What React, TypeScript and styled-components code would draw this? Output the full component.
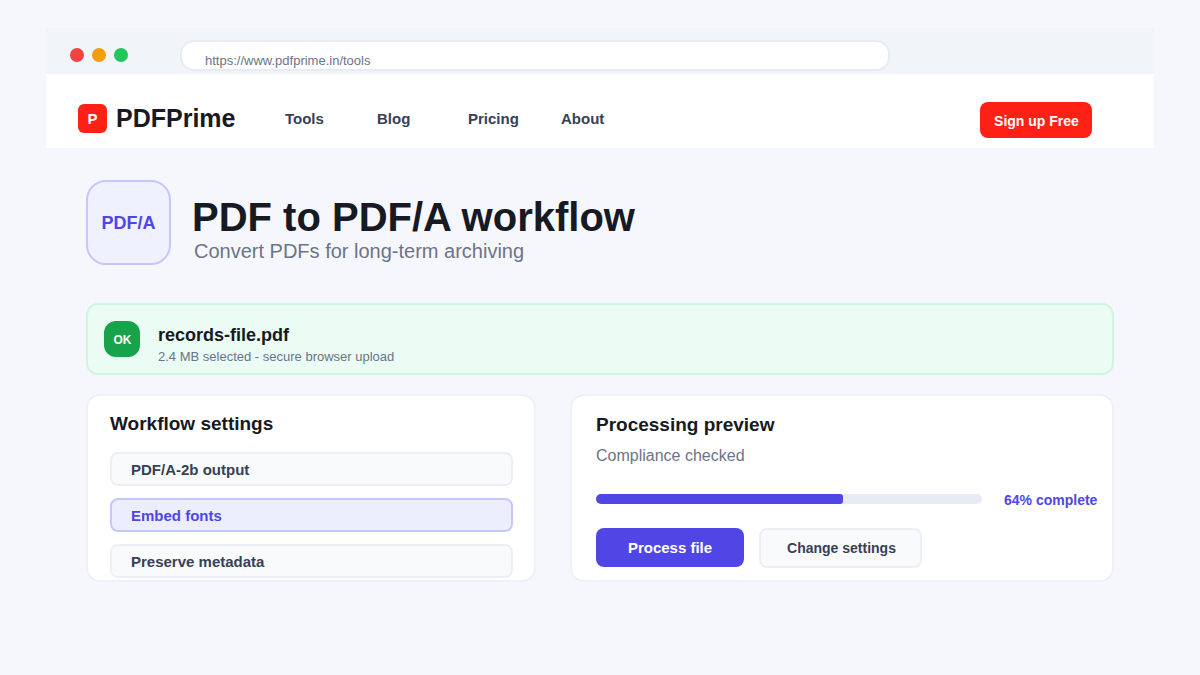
import styled, { createGlobalStyle } from "styled-components";

const fontStack = `"Liberation Sans", Arial, sans-serif`;

const GlobalStyle = createGlobalStyle`
  html, body {
    margin: 0;
    padding: 0;
    background: #f5f7fc;
    font-family: ${fontStack};
  }
  * {
    box-sizing: border-box;
  }
`;

const Page = styled.div`
  width: 1200px;
  height: 675px;
  padding: 28px 46px 0;
  overflow: hidden;
  background: #f5f7fc;
`;

const Chrome = styled.div`
  display: flex;
  height: 46px;
  padding: 12px 0 0 24px;
  background: #f1f4f9;
`;

const Dots = styled.div`
  display: flex;
  gap: 8px;
  margin-top: 8px;
  width: 110px;
`;

const Dot = styled.span<{ $color: string }>`
  width: 14px;
  height: 14px;
  border-radius: 50%;
  background: ${(p) => p.$color};
`;

const AddressBar = styled.div`
  width: 710px;
  height: 31px;
  padding: 11px 0 0 23px;
  background: #fff;
  border: 2px solid #e7ebf4;
  border-radius: 14px;
  font-size: 13px;
  line-height: 16px;
  color: #6b7488;
`;

const Nav = styled.nav`
  display: flex;
  align-items: center;
  height: 74px;
  padding: 14px 62px 0 32px;
  background: #fff;
`;

const Logo = styled.div`
  display: flex;
  align-items: center;
  gap: 9px;
  width: 207px;
`;

const LogoMark = styled.span`
  display: flex;
  align-items: center;
  justify-content: center;
  width: 29px;
  height: 29px;
  padding-top: 1px;
  border-radius: 6px;
  background: #ff2116;
  color: #fff;
  font-size: 15px;
  font-weight: 700;
`;

const LogoText = styled.span`
  font-size: 25px;
  font-weight: 700;
  color: #171923;
`;

const NavLinks = styled.div`
  display: flex;
  flex: 1;
`;

const NavLink = styled.a<{ $width: number }>`
  width: ${(p) => p.$width}px;
  font-size: 15px;
  font-weight: 700;
  color: #374155;
`;

const SignUp = styled.button`
  width: 112px;
  height: 36px;
  margin-top: 4px;
  padding: 2px 0 0 1px;
  border: 0;
  border-radius: 8px;
  background: #ff2116;
  color: #fff;
  font: 700 14px ${fontStack};
`;

const Main = styled.main`
  display: flex;
  flex-direction: column;
  padding: 32px 40px 0;
`;

const Hero = styled.header`
  display: flex;
  align-items: center;
  gap: 21px;
`;

const HeroIcon = styled.div`
  display: flex;
  align-items: center;
  justify-content: center;
  width: 85px;
  height: 85px;
  padding-top: 2px;
  border: 2px solid #c7c6ff;
  border-radius: 20px;
  background: #f0f1ff;
  color: #4f46e5;
  font-size: 18px;
  font-weight: 700;
`;

const HeroText = styled.div`
  margin-top: 11px;
`;

const HeroTitle = styled.h1`
  margin: 0;
  font-size: 40px;
  line-height: 48px;
  font-weight: 700;
  color: #171923;
`;

const HeroSub = styled.p`
  margin: -3px 0 0 2px;
  font-size: 20px;
  line-height: 26px;
  color: #6b7488;
`;

const FileCard = styled.section`
  display: flex;
  align-items: center;
  gap: 18px;
  height: 72px;
  margin-top: 38px;
  padding: 0 16px;
  border: 2px solid #cff5e1;
  border-radius: 12px;
  background: #eafcf3;
`;

const OkBadge = styled.span`
  display: flex;
  align-items: center;
  justify-content: center;
  width: 36px;
  height: 36px;
  padding: 2px 0 0 1px;
  border-radius: 12px;
  background: #16a34a;
  color: #fff;
  font-size: 12px;
  font-weight: 700;
`;

const FileInfo = styled.div`
  margin-top: 10px;
`;

const FileName = styled.div`
  font-size: 18px;
  line-height: 22px;
  font-weight: 700;
  color: #171923;
`;

const FileMeta = styled.div`
  margin-top: 3px;
  font-size: 13px;
  line-height: 16px;
  color: #6b7488;
`;

const Columns = styled.div`
  display: grid;
  grid-template-columns: 450px 544px;
  gap: 34px;
  margin-top: 19px;
`;

const Panel = styled.section<{ $pad: number }>`
  height: 188px;
  padding: 16px 0 0 ${(p) => p.$pad}px;
  overflow: hidden;
  border: 2px solid #eef1f7;
  border-radius: 14px;
  background: #fff;
`;

const PanelTitle = styled.h2<{ $offset?: number }>`
  margin: ${(p) => p.$offset ?? 0}px 0 0;
  font-size: 19px;
  line-height: 24px;
  font-weight: 700;
  color: #171923;
`;

const Options = styled.div`
  display: flex;
  flex-direction: column;
  gap: 12px;
  width: 403px;
  margin-top: 16px;
`;

const Option = styled.div<{ $active?: boolean }>`
  height: 34px;
  padding: 0 0 0 19px;
  border: 2px solid ${(p) => (p.$active ? "#c7c6ff" : "#eceff6")};
  border-radius: 8px;
  background: ${(p) => (p.$active ? "#eceefe" : "#f8fafc")};
  color: ${(p) => (p.$active ? "#4f46e5" : "#374155")};
  font-size: 15px;
  line-height: 32px;
  font-weight: 700;
`;

const Status = styled.p`
  margin: 7px 0 0;
  font-size: 16px;
  line-height: 24px;
  color: #6b7488;
`;

const ProgressRow = styled.div`
  display: flex;
  align-items: center;
  gap: 22px;
  margin-top: 22px;
`;

const Track = styled.div`
  width: 386px;
  height: 10px;
  border-radius: 5px;
  background: #e7ebf4;
  overflow: hidden;
`;

const Fill = styled.div`
  height: 100%;
  border-radius: 3px;
  background: #4f46e5;
`;

const ProgressLabel = styled.span`
  margin-top: 2px;
  font-size: 14px;
  font-weight: 700;
  color: #4f46e5;
`;

const Actions = styled.div`
  display: flex;
  gap: 15px;
  margin-top: 20px;
`;

const Primary = styled.button`
  width: 148px;
  height: 39px;
  padding: 0;
  border: 0;
  border-radius: 8px;
  background: #4f46e5;
  color: #fff;
  font: 700 15px ${fontStack};
`;

const Secondary = styled.button`
  width: 163px;
  height: 40px;
  padding: 0 0 0 2px;
  border: 2px solid #eceff6;
  border-radius: 8px;
  background: #f8fafc;
  color: #374155;
  font: 700 14px ${fontStack};
`;

const links = [
  { label: "Tools", width: 92 },
  { label: "Blog", width: 91 },
  { label: "Pricing", width: 93 },
  { label: "About", width: 60 },
];

const progress = 64;

export default function App() {
  return (
    <Page>
      <GlobalStyle />
      <Chrome>
        <Dots>
          <Dot $color="#ef4444" />
          <Dot $color="#f59e0b" />
          <Dot $color="#22c55e" />
        </Dots>
        <AddressBar>https://www.pdfprime.in/tools</AddressBar>
      </Chrome>
      <Nav>
        <Logo>
          <LogoMark>P</LogoMark>
          <LogoText>PDFPrime</LogoText>
        </Logo>
        <NavLinks>
          {links.map((l) => (
            <NavLink key={l.label} $width={l.width}>
              {l.label}
            </NavLink>
          ))}
        </NavLinks>
        <SignUp>Sign up Free</SignUp>
      </Nav>
      <Main>
        <Hero>
          <HeroIcon>PDF/A</HeroIcon>
          <HeroText>
            <HeroTitle>PDF to PDF/A workflow</HeroTitle>
            <HeroSub>Convert PDFs for long-term archiving</HeroSub>
          </HeroText>
        </Hero>
        <FileCard>
          <OkBadge>OK</OkBadge>
          <FileInfo>
            <FileName>records-file.pdf</FileName>
            <FileMeta>2.4 MB selected - secure browser upload</FileMeta>
          </FileInfo>
        </FileCard>
        <Columns>
          <Panel $pad={22}>
            <PanelTitle>Workflow settings</PanelTitle>
            <Options>
              <Option>PDF/A-2b output</Option>
              <Option $active>Embed fonts</Option>
              <Option>Preserve metadata</Option>
            </Options>
          </Panel>
          <Panel $pad={24}>
            <PanelTitle $offset={1}>Processing preview</PanelTitle>
            <Status>Compliance checked</Status>
            <ProgressRow>
              <Track>
                <Fill style={{ width: `${progress}%` }} />
              </Track>
              <ProgressLabel>{progress}% complete</ProgressLabel>
            </ProgressRow>
            <Actions>
              <Primary>Process file</Primary>
              <Secondary>Change settings</Secondary>
            </Actions>
          </Panel>
        </Columns>
      </Main>
    </Page>
  );
}
